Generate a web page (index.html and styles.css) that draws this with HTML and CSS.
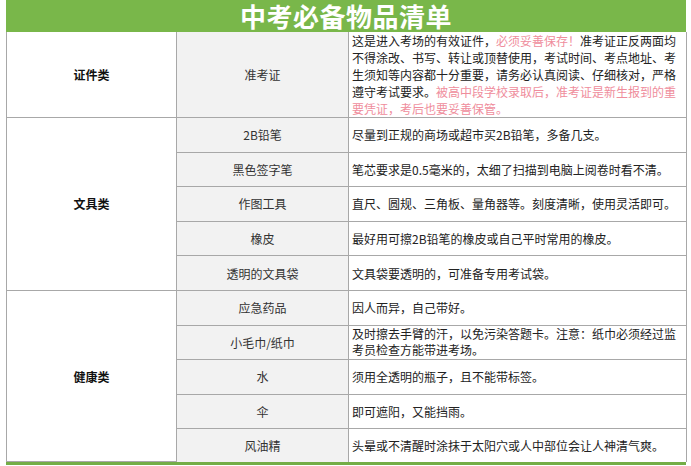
FILE: index.html
```html
<!DOCTYPE html>
<html lang="zh">
<head>
<meta charset="utf-8">
<title>中考必备物品清单</title>
<link rel="stylesheet" href="styles.css">
</head>
<body>
<div class="sheet">
  <div class="title">中考必备物品清单</div>
  <table class="list">
    <colgroup>
      <col class="c-cat">
      <col class="c-item">
      <col class="c-desc">
    </colgroup>
    <tbody>
      <tr class="r-big">
        <td class="cat">证件类</td>
        <td class="item">准考证</td>
        <td class="desc">这是进入考场的有效证件，<span class="warn">必须妥善保存！</span>准考证正反两面均不得涂改、书写、转让或顶替使用，考试时间、考点地址、考生须知等内容都十分重要，请务必认真阅读、仔细核对，严格遵守考试要求。<span class="warn">被高中段学校录取后，准考证是新生报到的重要凭证，考后也要妥善保管。</span></td>
      </tr>
      <tr class="r">
        <td class="cat" rowspan="5">文具类</td>
        <td class="item">2B铅笔</td>
        <td class="desc">尽量到正规的商场或超市买2B铅笔，多备几支。</td>
      </tr>
      <tr class="r">
        <td class="item">黑色签字笔</td>
        <td class="desc">笔芯要求是0.5毫米的，太细了扫描到电脑上阅卷时看不清。</td>
      </tr>
      <tr class="r">
        <td class="item">作图工具</td>
        <td class="desc">直尺、圆规、三角板、量角器等。刻度清晰，使用灵活即可。</td>
      </tr>
      <tr class="r">
        <td class="item">橡皮</td>
        <td class="desc">最好用可擦2B铅笔的橡皮或自己平时常用的橡皮。</td>
      </tr>
      <tr class="r">
        <td class="item">透明的文具袋</td>
        <td class="desc">文具袋要透明的，可准备专用考试袋。</td>
      </tr>
      <tr class="r">
        <td class="cat" rowspan="5">健康类</td>
        <td class="item">应急药品</td>
        <td class="desc">因人而异，自己带好。</td>
      </tr>
      <tr class="r">
        <td class="item">小毛巾/纸巾</td>
        <td class="desc tight">及时擦去手臂的汗，以免污染答题卡。注意：纸巾必须经过监考员检查方能带进考场。</td>
      </tr>
      <tr class="r">
        <td class="item">水</td>
        <td class="desc">须用全透明的瓶子，且不能带标签。</td>
      </tr>
      <tr class="r">
        <td class="item">伞</td>
        <td class="desc">即可遮阳，又能挡雨。</td>
      </tr>
      <tr class="r r-last">
        <td class="item">风油精</td>
        <td class="desc">头晕或不清醒时涂抹于太阳穴或人中部位会让人神清气爽。</td>
      </tr>
    </tbody>
  </table>
</div>
</body>
</html>
```

FILE: styles.css
```css
html, body {
  margin: 0;
  padding: 0;
  background: #ffffff;
}

body {
  font-family: "Noto Sans CJK SC", "Liberation Sans", sans-serif;
  color: #222222;
}

.sheet {
  width: 680px;
  margin-left: 6px;
  border-bottom: 3px solid #74ad46;
}

.title {
  height: 32px;
  background: #79b74a;
  color: #ffffff;
  font-size: 26px;
  font-weight: 700;
  line-height: 32px;
  text-align: center;
  letter-spacing: 0.5px;
}

.list {
  width: 680px;
  border-collapse: collapse;
  table-layout: fixed;
}

.c-cat { width: 170px; }
.c-item { width: 172px; }
.c-desc { width: 338px; }

.list td {
  border: 1px solid #a8a8a8;
  padding: 0;
  font-size: 12px;
  vertical-align: middle;
}

.list tr:first-child td {
  border-top: none;
}

.list tr.r-last td {
  border-bottom: none;
}

.r-big {
  height: 85px;
}

.r {
  height: 34.6px;
}

.r-last {
  height: 33px;
}

.cat {
  text-align: center;
  font-weight: 700;
  color: #111111;
  background: #ffffff;
}

.item {
  text-align: center;
  color: #333333;
  background: #f2f2f2;
}

.desc {
  padding: 0 3px 0 3px !important;
  line-height: 17px;
  color: #222222;
  background: #ffffff;
}

.desc.tight {
  line-height: 16px;
}

.warn {
  color: #ef8d9c;
}
```
